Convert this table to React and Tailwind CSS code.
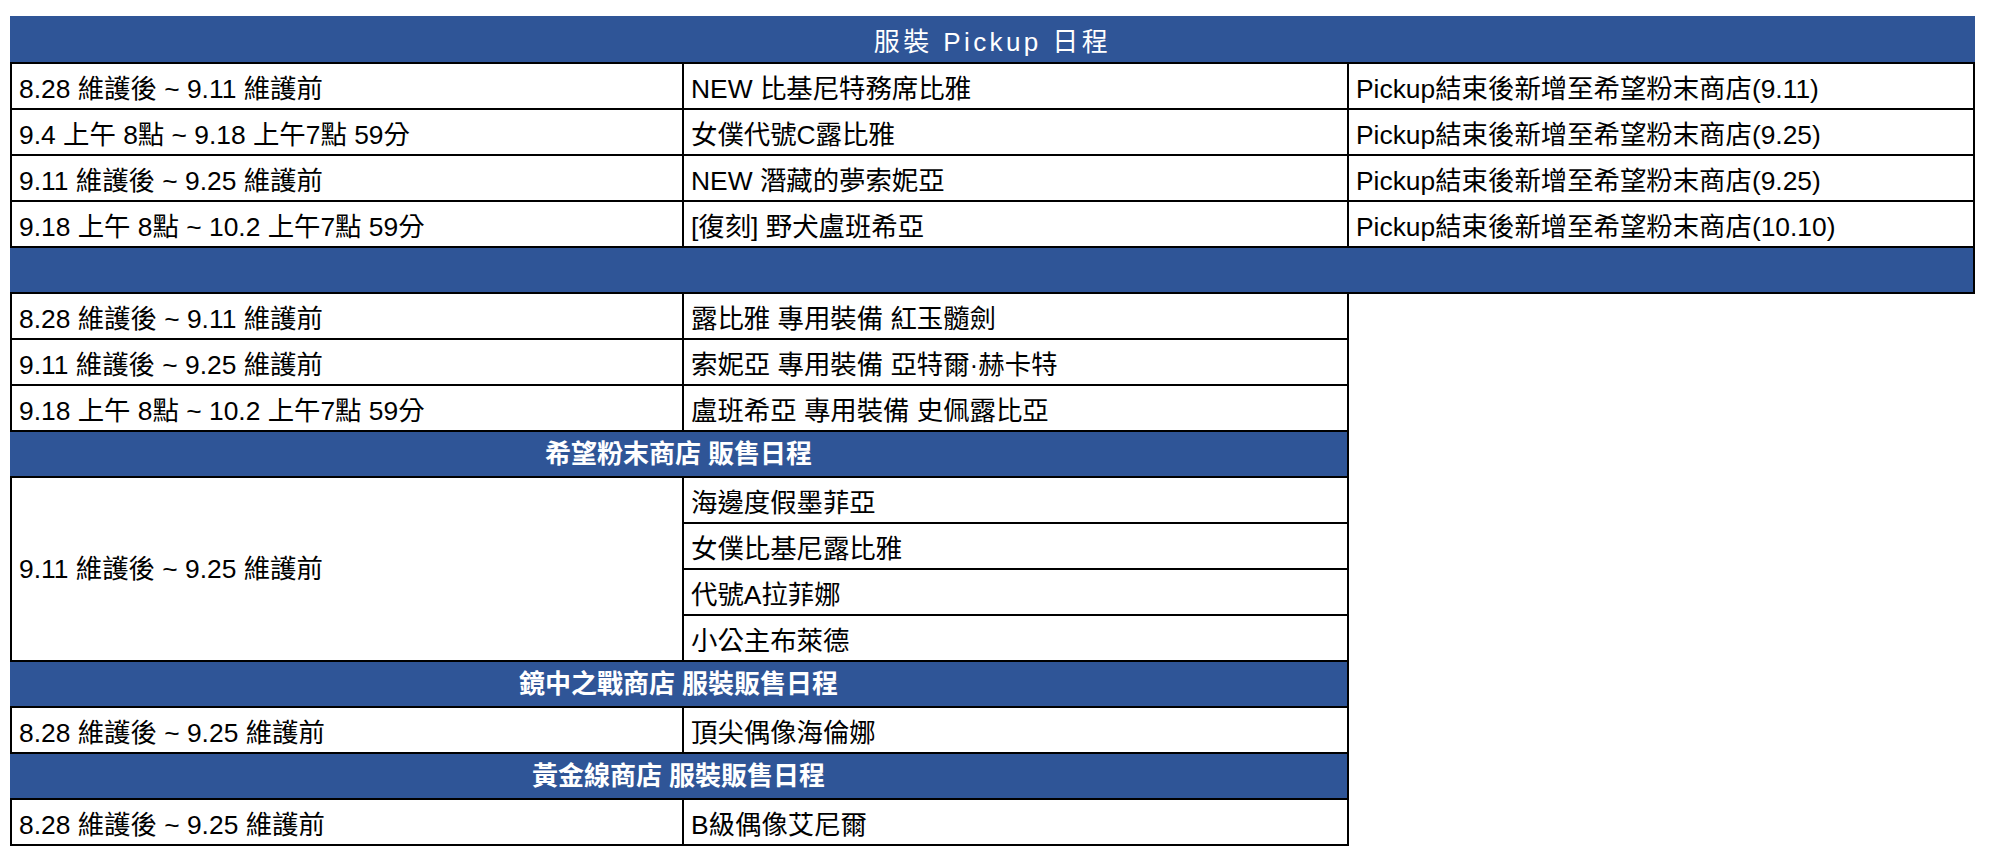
const font = "font-['Liberation_Sans','Noto_Sans_CJK_TC',sans-serif]"

const pickupRows = [
  ['8.28 維護後 ~ 9.11 維護前', 'NEW 比基尼特務席比雅', 'Pickup結束後新增至希望粉末商店(9.11)'],
  ['9.4 上午 8點 ~ 9.18 上午7點 59分', '女僕代號C露比雅', 'Pickup結束後新增至希望粉末商店(9.25)'],
  ['9.11 維護後 ~ 9.25 維護前', 'NEW 潛藏的夢索妮亞', 'Pickup結束後新增至希望粉末商店(9.25)'],
  ['9.18 上午 8點 ~ 10.2 上午7點 59分', '[復刻] 野犬盧班希亞', 'Pickup結束後新增至希望粉末商店(10.10)'],
]

const weaponRows = [
  ['8.28 維護後 ~ 9.11 維護前', '露比雅 專用裝備 紅玉髓劍'],
  ['9.11 維護後 ~ 9.25 維護前', '索妮亞 專用裝備 亞特爾·赫卡特'],
  ['9.18 上午 8點 ~ 10.2 上午7點 59分', '盧班希亞 專用裝備 史佩露比亞'],
]

const hopeShop = ['海邊度假墨菲亞', '女僕比基尼露比雅', '代號A拉菲娜', '小公主布萊德']

function Band({ title }) {
  return (
    <div className="flex h-[46px] w-[1339px] items-center justify-center border-r-2 border-b-2 border-black bg-[#2f5597] text-[26px] leading-[30px] font-bold text-white">
      {title}
    </div>
  )
}

function TwoColRow({ left, right }) {
  return (
    <div className="flex h-[46px] w-[1339px] border-x-2 border-b-2 border-black">
      <div className="w-[672px] shrink-0 border-r-2 border-black pl-[7px] pt-[10px] whitespace-nowrap">{left}</div>
      <div className="flex-1 pl-[7px] pt-[10px] whitespace-nowrap">{right}</div>
    </div>
  )
}

export default function App() {
  return (
    <div className={`min-h-[854px] bg-white pl-[10px] pt-[16px] text-[26.4px] leading-[30px] text-black ${font}`}>
      <div className="flex h-[48px] w-[1965px] items-center justify-center border-b-2 border-black bg-[#2f5597] pt-[5px] text-[26px] tracking-[3.4px] text-white">
        服裝 Pickup 日程
      </div>

      {pickupRows.map(([a, b, c]) => (
        <div key={a + b} className="flex h-[46px] w-[1965px] border-x-2 border-b-2 border-black">
          <div className="w-[672px] shrink-0 border-r-2 border-black pl-[7px] pt-[10px] whitespace-nowrap">{a}</div>
          <div className="w-[665px] shrink-0 border-r-2 border-black pl-[7px] pt-[10px] whitespace-nowrap">{b}</div>
          <div className="flex-1 pl-[7px] pt-[10px] whitespace-nowrap">{c}</div>
        </div>
      ))}

      <div className="h-[46px] w-[1965px] border-r-2 border-b-2 border-black bg-[#2f5597]" />

      {weaponRows.map(([a, b]) => (
        <TwoColRow key={b} left={a} right={b} />
      ))}

      <Band title="希望粉末商店 販售日程" />
      <div className="flex w-[1339px] border-x-2 border-black">
        <div className="flex h-[184px] w-[672px] shrink-0 items-center border-r-2 border-b-2 border-black pl-[7px] whitespace-nowrap">
          9.11 維護後 ~ 9.25 維護前
        </div>
        <div className="flex flex-1 flex-col">
          {hopeShop.map((name) => (
            <div key={name} className="h-[46px] border-b-2 border-black pl-[7px] pt-[10px] whitespace-nowrap">
              {name}
            </div>
          ))}
        </div>
      </div>

      <Band title="鏡中之戰商店 服裝販售日程" />
      <TwoColRow left="8.28 維護後 ~ 9.25 維護前" right="頂尖偶像海倫娜" />

      <Band title="黃金線商店 服裝販售日程" />
      <TwoColRow left="8.28 維護後 ~ 9.25 維護前" right="B級偶像艾尼爾" />
    </div>
  )
}
